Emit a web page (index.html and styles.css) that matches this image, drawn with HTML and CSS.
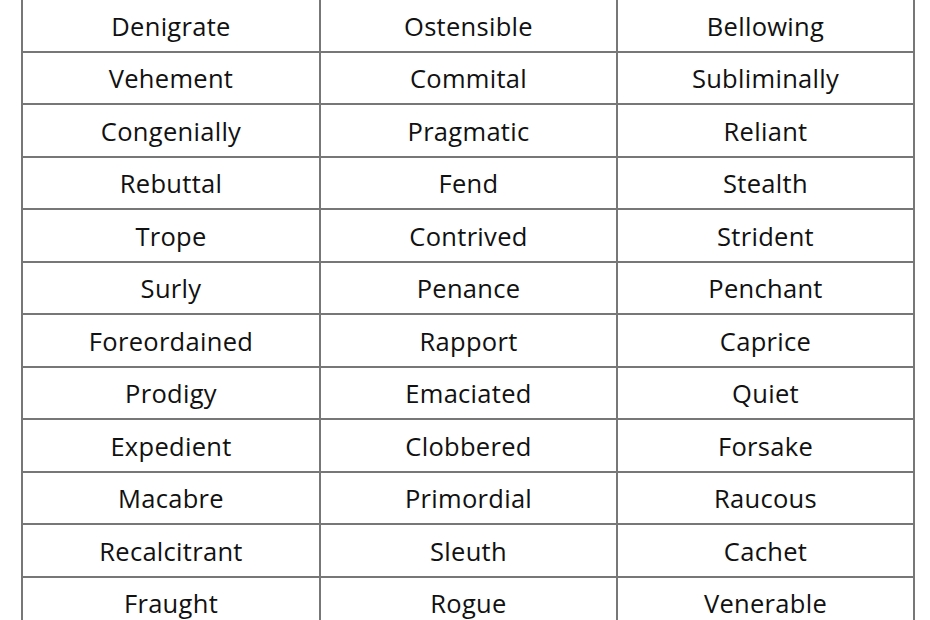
FILE: index.html
```html
<!DOCTYPE html>
<html lang="en">
<head>
<meta charset="utf-8">
<title>Word list</title>
<link rel="stylesheet" href="styles.css">
</head>
<body>
<div class="table">
  <div class="cell">Denigrate</div><div class="cell">Ostensible</div><div class="cell">Bellowing</div>
  <div class="cell">Vehement</div><div class="cell">Commital</div><div class="cell">Subliminally</div>
  <div class="cell">Congenially</div><div class="cell">Pragmatic</div><div class="cell">Reliant</div>
  <div class="cell">Rebuttal</div><div class="cell">Fend</div><div class="cell">Stealth</div>
  <div class="cell">Trope</div><div class="cell">Contrived</div><div class="cell">Strident</div>
  <div class="cell">Surly</div><div class="cell">Penance</div><div class="cell">Penchant</div>
  <div class="cell">Foreordained</div><div class="cell">Rapport</div><div class="cell">Caprice</div>
  <div class="cell">Prodigy</div><div class="cell">Emaciated</div><div class="cell">Quiet</div>
  <div class="cell">Expedient</div><div class="cell">Clobbered</div><div class="cell">Forsake</div>
  <div class="cell">Macabre</div><div class="cell">Primordial</div><div class="cell">Raucous</div>
  <div class="cell">Recalcitrant</div><div class="cell">Sleuth</div><div class="cell">Cachet</div>
  <div class="cell">Fraught</div><div class="cell">Rogue</div><div class="cell">Venerable</div>
</div>
</body>
</html>
```
FILE: styles.css
```css
html, body {
  margin: 0;
  padding: 0;
  background: #ffffff;
  overflow: hidden;
}
.table {
  margin-left: 21px;
  width: 894px;
  display: grid;
  grid-template-columns: 298px 297px 297px;
  grid-auto-rows: 52.5px;
  border-left: 2px solid #777777;
  box-sizing: border-box;
  font-family: "Open Sans", sans-serif;
  font-size: 25.5px;
  letter-spacing: 0.3px;
  color: #111111;
}
.cell {
  box-sizing: border-box;
  border-right: 2px solid #777777;
  border-bottom: 2px solid #777777;
  display: flex;
  align-items: center;
  justify-content: center;
  padding-top: 1px;
}
```
